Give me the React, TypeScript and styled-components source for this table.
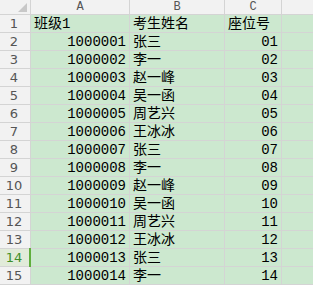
import React from 'react'
import styled, { createGlobalStyle } from 'styled-components'

const GlobalStyle = createGlobalStyle`
  html, body {
    margin: 0;
    padding: 0;
    background: #ffffff;
    overflow: hidden;
  }
`

const Sheet = styled.div`
  display: grid;
  grid-template-columns: 30px 98px 94px 56px 1fr;
  grid-auto-rows: 17px;
  grid-template-rows: 14px;
  gap: 1px;
  width: 313px;
  padding-bottom: 1px;
  background: #d4d4d4;
`

const Corner = styled.div`
  position: relative;
  background: #f2f2f2;
  &::after {
    content: '';
    position: absolute;
    right: 3px;
    bottom: 2px;
    width: 0;
    height: 0;
    border-left: 9px solid transparent;
    border-bottom: 9px solid #c8c8c8;
  }
`

const ColHead = styled.div`
  background: #f2f2f2;
  color: #555555;
  font-family: 'Liberation Mono', monospace;
  font-size: 12px;
  line-height: 14px;
  text-align: center;
`

const RowHead = styled.div<{ $active?: boolean }>`
  position: relative;
  background: ${(p) => (p.$active ? '#e1ebd9' : '#f2f2f2')};
  color: ${(p) => (p.$active ? '#3f8f2a' : '#555555')};
  font-family: 'DejaVu Sans', sans-serif;
  font-size: 13px;
  line-height: 18px;
  text-align: center;
  padding-right: 2px;
  ${(p) =>
    p.$active &&
    `&::after {
      content: '';
      position: absolute;
      right: -1px;
      top: -1px;
      bottom: -1px;
      width: 2px;
      background: #5fae3c;
    }`}
`

const Cell = styled.div<{ $right?: boolean }>`
  background: #cce8cf;
  color: #000000;
  font-family: 'Liberation Mono', 'Noto Sans CJK SC', monospace;
  font-size: 14px;
  line-height: 18px;
  padding: 0 3px;
  text-align: ${(p) => (p.$right ? 'right' : 'left')};
  white-space: nowrap;
  overflow: hidden;
`

const names = ['张三', '李一', '赵一峰', '吴一函', '周艺兴', '王冰冰', '张三', '李一', '赵一峰', '吴一函', '周艺兴', '王冰冰', '张三', '李一']

const rows = names.map((name, i) => ({
  id: String(1000001 + i),
  name,
  seat: String(i + 1).padStart(2, '0'),
}))

export default function App() {
  return (
    <>
      <GlobalStyle />
      <Sheet>
        <Corner />
        <ColHead>A</ColHead>
        <ColHead>B</ColHead>
        <ColHead>C</ColHead>
        <ColHead />

        <RowHead>1</RowHead>
        <Cell>班级1</Cell>
        <Cell>考生姓名</Cell>
        <Cell>座位号</Cell>
        <Cell />

        {rows.map((r, i) => (
          <React.Fragment key={r.id}>
            <RowHead $active={i + 2 === 14}>{i + 2}</RowHead>
            <Cell $right>{r.id}</Cell>
            <Cell>{r.name}</Cell>
            <Cell $right>{r.seat}</Cell>
            <Cell />
          </React.Fragment>
        ))}
      </Sheet>
    </>
  )
}
